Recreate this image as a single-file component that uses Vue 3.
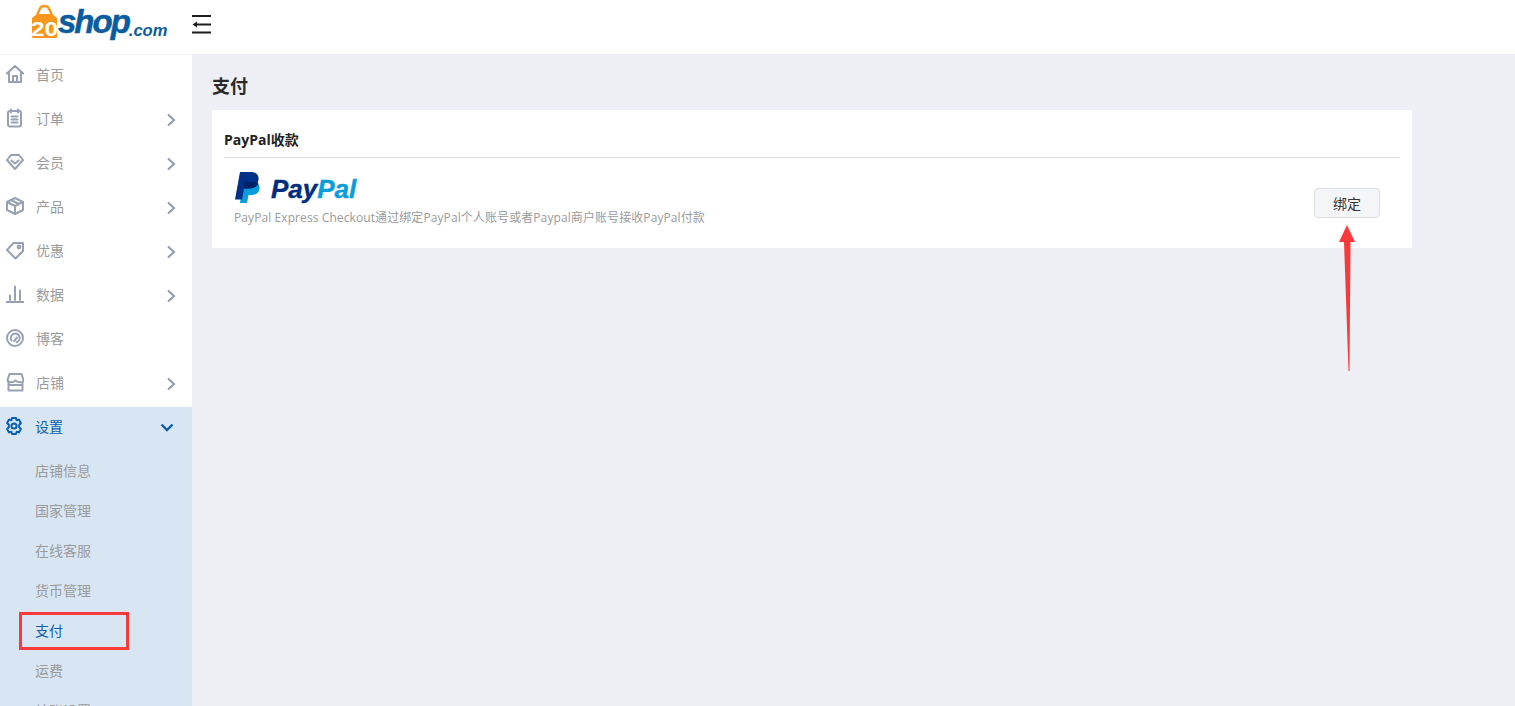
<script setup>
const menu = [
  { key: 'home', label: '首页' },
  { key: 'order', label: '订单', arrow: true },
  { key: 'member', label: '会员', arrow: true },
  { key: 'product', label: '产品', arrow: true },
  { key: 'promo', label: '优惠', arrow: true },
  { key: 'data', label: '数据', arrow: true },
  { key: 'blog', label: '博客' },
  { key: 'shop', label: '店铺', arrow: true },
]
const subs = ['店铺信息', '国家管理', '在线客服', '货币管理', '支付', '运费', '结账设置']
</script>

<template>
  <div class="page">
    <header class="topbar">
      <div class="logo">
        <svg class="bag" width="26" height="34" viewBox="0 0 26 34">
          <path d="M5 10 8 3.500C9 1.500 10.500 1 12.500 1S16 1.500 17 3.500L20 10" fill="none" stroke="#f7981d" stroke-width="2.400" />
          <path d="M5 9H20L25 13V32Q25 33 24 33H1Q0 33 0 32V13z" fill="#f7981d" />
          <text x="-1" y="31" class="bag-text" textLength="27" lengthAdjust="spacingAndGlyphs">20</text>
        </svg>
        <span class="logo-shop">shop</span><span class="logo-com">.com</span>
      </div>
      <svg class="fold" width="19" height="19" viewBox="0 0 19 19">
        <path d="M0 1h19M5 9.500h14M0 17.500h19" fill="none" stroke="#1d1d1d" stroke-width="2" />
        <path d="M0.500 9.500 5 6.500v6z" fill="#1d1d1d" />
      </svg>
    </header>

    <div class="body">
      <aside class="sidebar">
        <div v-for="m in menu" :key="m.key" class="item">
          <svg class="icon" width="18" height="20" viewBox="0 0 18 20">
            <g v-if="m.key === 'home'">
              <path d="M.8 9.500 9 2l8.200 7.500M3 8v10h12V8" />
              <path d="M7 18v-6h4v6" />
            </g>
            <g v-else-if="m.key === 'order'">
              <rect x="2" y="3" width="13" height="15.500" rx="2" />
              <path d="M5 1.500v3M12 1.500v3M5.500 8.500h6M5.500 11.500h6M5.500 14.500h6" />
            </g>
            <g v-else-if="m.key === 'member'">
              <path d="M5 3h8l4 5-8 9-8-9z" />
              <path d="M5.500 8.500 9 11.500l3.500-3" />
            </g>
            <g v-else-if="m.key === 'product'">
              <path d="M9 2l8 4v8l-8 4-8-4V6z" />
              <path d="M1 6l8 4 8-4M9 10v8M5 4l8 4" />
            </g>
            <g v-else-if="m.key === 'promo'">
              <path d="M7.500 3H17v8l-7.500 7.500L1 10z" />
              <circle cx="13" cy="7" r="1.400" />
            </g>
            <g v-else-if="m.key === 'data'">
              <path d="M.5 18h17M4 11.500V16M9 2.500V16M14 6.500V16" />
            </g>
            <g v-else-if="m.key === 'blog'">
              <circle cx="9" cy="10" r="8" />
              <path d="M5.500 12.500A4.500 4.500 0 1 1 10.500 14.300M8 13l3-3.500" />
            </g>
            <g v-else>
              <path d="M3.500 2h12l2 6c-.3 3-5.500 3-8 .5C7 11 2 11 1.500 8z" />
              <path d="M2.500 10v8.500h14V10M2.500 13h14" />
            </g>
          </svg>
          <span class="label">{{ m.label }}</span>
          <svg v-if="m.arrow" class="chev" width="10" height="14" viewBox="0 0 10 14">
            <path d="M2 1.500 8 7l-6 5.500" />
          </svg>
        </div>

        <div class="item active">
          <svg class="icon" width="18" height="20" viewBox="0 0 18 18">
            <path d="M7 1h4l.6 2.300 2.300-.7 2 3.400-1.700 1.700v2.600l1.700 1.700-2 3.400-2.300-.7L11 17H7l-.6-2.300-2.300.7-2-3.400 1.700-1.700V7.700L2.100 6l2-3.400 2.300.7z" />
            <circle cx="9" cy="9" r="2.600" />
          </svg>
          <span class="label">设置</span>
          <svg class="chev-down" width="14" height="9" viewBox="0 0 14 9">
            <path d="M1.500 1.500 7 7l5.500-5.500" />
          </svg>
        </div>
        <div class="subs">
          <div v-for="s in subs" :key="s" class="sub" :class="{ current: s === '支付' }">{{ s }}</div>
        </div>
      </aside>

      <main class="main">
        <h1 class="title">支付</h1>
        <section class="card">
          <h2 class="card-title">PayPal收款</h2>
          <div class="card-row">
            <div class="info">
              <div class="pp-logo">
                <svg class="pp-mark" width="27" height="31" viewBox="0 0 27 31">
                  <path d="M8 10h9c5 0 8 2 7.500 6.500C24 21 21 23 16.500 23h-3l-1.500 8H5z" fill="#0a9ddc" />
                  <path d="M5 0h10c6 0 9 2.500 8.500 7.500C23 13.500 19 16.500 13.500 16.500H9L7 27.500H0z" fill="#003087" />
                  <path d="M8 10h8.500c3 0 5.500.5 7 1.500-1.200 3-5 5-10 5H9z" fill="#012169" />
                </svg>
                <span class="pp-word"><span class="pay">Pay</span><span class="pal">Pal</span></span>
              </div>
              <p class="desc">PayPal Express Checkout通过绑定PayPal个人账号或者Paypal商户账号接收PayPal付款</p>
            </div>
            <button class="bind" type="button">绑定</button>
          </div>
        </section>
      </main>
    </div>

    <div class="mark-box"></div>
    <svg class="mark-arrow" width="18" height="146" viewBox="0 0 18 146">
      <path d="M8 0 16 17H11.500L10.500 146H9.500L5 17H0z" fill="#f93a3a" />
    </svg>
  </div>
</template>

<style>
html, body { margin: 0; overflow: hidden; }
</style>

<style scoped>
.page {
  position: relative;
  width: 1515px;
  height: 706px;
  overflow: hidden;
  font-family: "Open Sans", "Noto Sans CJK SC", sans-serif;
  background: #eeeff5;
}
.topbar {
  height: 54px;
  background: #fff;
  border-bottom: 1px solid #eceef3;
  display: flex;
  align-items: flex-start;
}
.logo {
  width: 192px;
  box-sizing: border-box;
  padding: 2px 0 0 32px;
  display: flex;
  align-items: flex-start;
  font-family: "Liberation Sans", sans-serif;
  font-style: italic;
  font-weight: 700;
  color: #0b5c9e;
}
.bag { margin-top: 3px; overflow: visible; flex: none; }
.bag-text {
  font-family: "Liberation Sans", sans-serif;
  font-size: 20px;
  font-weight: 700;
  font-style: normal;
  fill: #fff;
}
.logo-shop {
  font-size: 33px;
  line-height: 40px;
  letter-spacing: -2px;
  -webkit-text-stroke: 0.500px #0b5c9e;
}
.logo-com { font-size: 16.500px; line-height: 16px; margin-top: 20px; }
.fold { margin-top: 15px; }
.body { display: flex; height: 651px; }
.sidebar { width: 192px; flex: none; background: #fff; overflow: hidden; }
.item {
  height: 44px;
  box-sizing: border-box;
  padding: 0 16px 6px 6px;
  display: flex;
  align-items: center;
  font-size: 14px;
  color: #9a9a9a;
}
.icon { flex: none; fill: none; stroke: #98a1b4; stroke-width: 2; stroke-linejoin: round; stroke-linecap: round; }
.label { margin-left: 12px; flex: 1; }
.chev { fill: none; stroke: #8e9ab0; stroke-width: 2; flex: none; margin-top: 3px; }
.item.active { background: #d8e6f4; color: #0a5eac; padding-left: 5px; padding-right: 18px; }
.item.active .icon { stroke: #0a5eac; stroke-width: 2; }
.chev-down { fill: none; stroke: #0a5eac; stroke-width: 2.400; flex: none; margin-top: 2px; }
.subs { background: #d8e6f4; }
.sub {
  height: 40px;
  line-height: 40px;
  padding-left: 35px;
  font-size: 14px;
  color: #9a9a9a;
}
.sub.current { color: #0a5eac; }
.main { flex: 1; padding: 0 0 0 20px; }
.title {
  margin: 18px 0 0;
  font-size: 18px;
  line-height: 27px;
  font-weight: 700;
  color: #2a2a2a;
}
.card {
  width: 1200px;
  height: 138px;
  margin-top: 10px;
  box-sizing: border-box;
  padding: 0 12px;
  background: #fff;
}
.card-title {
  margin: 0;
  height: 48px;
  box-sizing: border-box;
  padding-top: 20px;
  font-size: 14px;
  line-height: 20px;
  font-weight: 700;
  color: #222;
  border-bottom: 1px solid #dcdcdc;
}
.card-row { display: flex; justify-content: space-between; padding: 14px 20px 0 10px; }
.pp-logo { display: flex; align-items: center; height: 31px; }
.pp-mark { margin-left: 1px; }
.pp-word {
  margin-left: 9px;
  padding-top: 4px;
  font-family: "Liberation Sans", sans-serif;
  font-size: 26px;
  line-height: 31px;
  font-weight: 700;
  font-style: italic;
  -webkit-text-stroke: 0.400px currentColor;
}
.pay { color: #012d7e; }
.pal { color: #0a9ddc; }
.desc { margin: 6px 0 0; font-size: 12px; line-height: 18px; color: #9a9a9a; letter-spacing: 0.090px; }
.bind {
  width: 66px;
  height: 30px;
  margin-top: 16px;
  padding: 0;
  border: 1px solid #dddfe3;
  border-radius: 4px;
  background: #f4f5f8;
  font-family: inherit;
  font-size: 14px;
  color: #333;
}
.mark-box {
  position: absolute;
  left: 19px;
  top: 612px;
  width: 110px;
  height: 38px;
  box-sizing: border-box;
  border: 3px solid #f93a3a;
}
.mark-arrow { position: absolute; left: 1339px; top: 225px; }
</style>
